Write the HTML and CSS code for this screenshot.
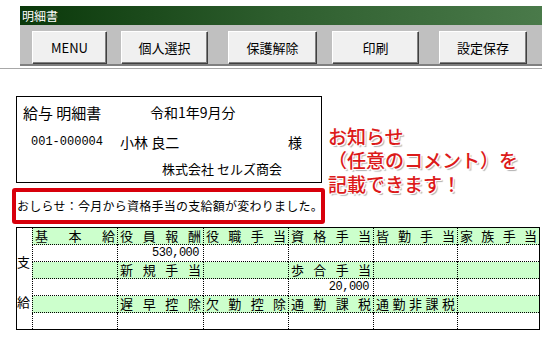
FILE: index.html
```html
<!DOCTYPE html>
<html lang="ja">
<head>
  <meta charset="UTF-8" />
  <title>明細書</title>
  <link rel="stylesheet" href="styles.css">
</head>
<body>

  <!-- Window title + toolbar -->
  <div class="title-bar">明細書</div>
  <div class="toolbar">
    <button class="tool-btn menu-btn">MENU</button>
    <button class="tool-btn">個人選択</button>
    <button class="tool-btn wide">保護解除</button>
    <button class="tool-btn">印刷</button>
    <button class="tool-btn">設定保存</button>
  </div>
  <div class="rule"></div>

  <main>
    <div class="top-row">
      <div class="left-col">
        <div class="slip">
          <div class="slip-row first">
            <span class="slip-title">給与 明細書</span>
            <span class="slip-month">令和1年9月分</span>
          </div>
          <div class="slip-row second">
            <span class="slip-id">001-000004</span>
            <span class="slip-name">小林 良二</span>
            <span>様</span>
          </div>
          <div class="slip-row third">株式会社 セルズ商会</div>
        </div>
        <div class="notice">おしらせ：今月から資格手当の支給額が変わりました。</div>
      </div>
      <div class="memo">
        <div>お知らせ</div>
        <div>（任意のコメント）を</div>
        <div>記載できます！</div>
      </div>
    </div>

    <!-- 支給 grid -->
    <div class="pay-table">
      <div class="side-label">
        <span>支</span>
        <span class="lower">給</span>
      </div>

      <div class="cell head">基本給</div>
      <div class="cell head">役員報酬</div>
      <div class="cell head">役職手当</div>
      <div class="cell head">資格手当</div>
      <div class="cell head">皆勤手当</div>
      <div class="cell head">家族手当</div>

      <div class="cell"></div>
      <div class="cell num">530,000</div>
      <div class="cell"></div>
      <div class="cell"></div>
      <div class="cell"></div>
      <div class="cell"></div>

      <div class="cell head"></div>
      <div class="cell head">新規手当</div>
      <div class="cell head"></div>
      <div class="cell head">歩合手当</div>
      <div class="cell head"></div>
      <div class="cell head"></div>

      <div class="cell"></div>
      <div class="cell"></div>
      <div class="cell"></div>
      <div class="cell num">20,000</div>
      <div class="cell"></div>
      <div class="cell"></div>

      <div class="cell head"></div>
      <div class="cell head">遅早控除</div>
      <div class="cell head">欠勤控除</div>
      <div class="cell head">通勤課税</div>
      <div class="cell head">通勤非課税</div>
      <div class="cell head"></div>

      <div class="cell last"></div>
      <div class="cell last"></div>
      <div class="cell last"></div>
      <div class="cell last"></div>
      <div class="cell last"></div>
      <div class="cell last"></div>
    </div>
  </main>

</body>
</html>
```

FILE: styles.css
```css
body {
  margin: 0;
  font-family: "Noto Sans CJK JP", "Noto Sans", sans-serif;
  color: #000;
  background: #fff;
  width: 542px;
  overflow: hidden;
}

.title-bar {
  margin: 6px 0 0 20px;
  height: 19px;
  padding-left: 2px;
  background: linear-gradient(to right, #0a380a, #2e5e2e 50%, #4a7a4a);
  color: #fff;
  font-size: 12px;
  line-height: 19px;
}

.toolbar {
  margin-left: 20px;
  height: 41px;
  padding: 6px 0 0 12px;
  box-sizing: border-box;
  background: #c0c0c0;
  border-bottom: 2px solid #808080;
  display: flex;
  align-items: flex-start;
}

.tool-btn {
  width: 86px;
  height: 32px;
  margin-left: 21px;
  padding: 0;
  background: #f0f0f0;
  border: none;
  border-top: 1px solid #fff;
  border-left: 1px solid #fff;
  box-shadow: inset -1px -1px 0 #808080, 1px 1px 0 #404040;
  font-family: "Noto Sans CJK JP", sans-serif;
  font-size: 13px;
  color: #000;
}

.menu-btn {
  width: 74px;
  margin-left: 0;
}

.tool-btn:nth-child(2) {
  margin-left: 15px;
}

.tool-btn.wide {
  width: 88px;
}

.tool-btn:nth-child(4) {
  margin-left: 16px;
}

.tool-btn:nth-child(5) {
  width: 87px;
}

.rule {
  height: 1px;
  margin-top: 2px;
  background: #a8a8a8;
}

/* upper area: slip, notice, comment */
.top-row {
  display: flex;
}

.left-col {
  margin: 27px 0 0 12px;
}

.slip {
  width: 306px;
  height: 87px;
  margin-left: 4px;
  box-sizing: border-box;
  border: 1px solid #000;
}

.slip-row {
  display: flex;
  align-items: center;
  white-space: nowrap;
}

.slip-row.first {
  height: 30px;
  padding-left: 6px;
}

.slip-title {
  width: 127px;
  font-size: 15px;
}

.slip-month {
  font-size: 14px;
}

.slip-row.second {
  height: 30px;
  padding-left: 14px;
  font-size: 14px;
}

.slip-id {
  width: 89px;
  font-family: "Liberation Mono", monospace;
  font-size: 12px;
}

.slip-name {
  width: 168px;
}

.slip-row.third {
  height: 22px;
  padding-left: 145px;
  font-size: 13px;
}

.notice {
  margin-top: 5px;
  width: 313px;
  height: 36px;
  box-sizing: border-box;
  border: 4px solid #d8000c;
  border-radius: 3px;
  padding-left: 1px;
  font-size: 12px;
  letter-spacing: 0.25px;
  line-height: 28px;
  white-space: nowrap;
}

.memo {
  margin: 55px 0 0 3px;
  color: #dc1a1a;
  font-size: 19px;
  font-weight: 500;
  line-height: 24px;
  white-space: nowrap;
  text-shadow: 1px 1px 0 #fff, -1px -1px 0 #fff, 1px -1px 0 #fff, -1px 1px 0 #fff, 2px 2px 1px #b0b0b0;
}

.memo div {
  height: 24px;
}

/* 支給 table */
.pay-table {
  display: grid;
  grid-template-columns: 15px 85px 86px 85px 85px 84px 82px;
  grid-template-rows: repeat(5, 17px) 16px;
  width: fit-content;
  margin: 3px 0 0 16px;
  border: 1px solid #000;
}

.side-label {
  grid-row: 1 / 7;
  display: flex;
  flex-direction: column;
  padding-top: 27px;
  font-size: 13px;
  line-height: 14px;
}

.side-label .lower {
  margin-top: 26px;
}

.cell {
  box-sizing: border-box;
  border-left: 1px dotted #000;
  border-bottom: 1px dotted #000;
  padding: 0 2px;
  font-size: 13px;
  line-height: 16px;
  white-space: nowrap;
}

.cell.head {
  background: #ccffcc;
  text-align: justify;
  text-align-last: justify;
}

.cell.num {
  text-align: right;
  padding-right: 4px;
  font-family: "Liberation Mono", monospace;
  font-size: 12px;
  letter-spacing: -0.5px;
}

.cell.last {
  border-bottom: none;
}
```
